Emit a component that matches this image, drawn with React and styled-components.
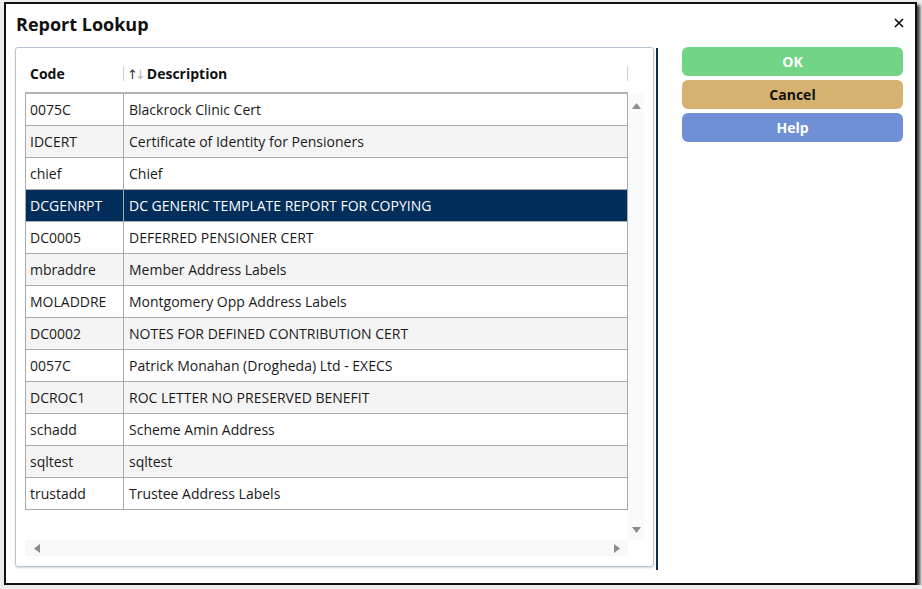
import styled, { createGlobalStyle } from "styled-components";

const GlobalStyle = createGlobalStyle`
  html, body {
    margin: 0;
    padding: 0;
    background: #ececec;
  }
  body {
    font-family: "Open Sans", "DejaVu Sans", sans-serif;
    color: #111;
  }
`;

const reports = [
  { code: "0075C", description: "Blackrock Clinic Cert" },
  { code: "IDCERT", description: "Certificate of Identity for Pensioners" },
  { code: "chief", description: "Chief" },
  { code: "DCGENRPT", description: "DC GENERIC TEMPLATE REPORT FOR COPYING" },
  { code: "DC0005", description: "DEFERRED PENSIONER CERT" },
  { code: "mbraddre", description: "Member Address Labels" },
  { code: "MOLADDRE", description: "Montgomery Opp Address Labels" },
  { code: "DC0002", description: "NOTES FOR DEFINED CONTRIBUTION CERT" },
  { code: "0057C", description: "Patrick Monahan (Drogheda) Ltd - EXECS" },
  { code: "DCROC1", description: "ROC LETTER NO PRESERVED BENEFIT" },
  { code: "schadd", description: "Scheme Amin Address" },
  { code: "sqltest", description: "sqltest" },
  { code: "trustadd", description: "Trustee Address Labels" },
];

const selectedCode = "DCGENRPT";

function Arrow({ dir }) {
  const points = {
    up: "0,7 4.5,1 9,7",
    down: "0,1 4.5,7 9,1",
    left: "7,0 1,4.5 7,9",
    right: "1,0 7,4.5 1,9",
  };
  return (
    <svg width="9" height="9" viewBox="0 0 9 9">
      <polygon points={points[dir]} fill="#8c8c8c" />
    </svg>
  );
}

export default function App() {
  return (
    <>
      <GlobalStyle />
      <Dialog>
        <TitleBar>
          <Title>Report Lookup</Title>
          <CloseButton aria-label="close">
            <svg width="10" height="10" viewBox="0 0 10 10">
              <path d="M1 1 L9 9 M9 1 L1 9" stroke="#111" strokeWidth="1.7" />
            </svg>
          </CloseButton>
        </TitleBar>
        <Body>
          <GridPanel>
            <HeaderRow>
              <HeaderCell>Code</HeaderCell>
              <HeaderCell>
                <SortIcon>
                  <span>↑</span>
                  <span className="off">↓</span>
                </SortIcon>
                Description
              </HeaderCell>
            </HeaderRow>
            <ScrollBody>
              <Table>
                {reports.map((r, i) => (
                  <Row
                    key={r.code}
                    $alt={i % 2 === 1}
                    $selected={r.code === selectedCode}
                  >
                    <Cell>{r.code}</Cell>
                    <Cell>{r.description}</Cell>
                  </Row>
                ))}
              </Table>
              <VScroll>
                <Arrow dir="up" />
                <Arrow dir="down" />
              </VScroll>
            </ScrollBody>
            <HScroll>
              <Arrow dir="left" />
              <Arrow dir="right" />
            </HScroll>
          </GridPanel>
          <Divider />
          <Buttons>
            <Button $bg="#72d585" $color="#fff">OK</Button>
            <Button $bg="#d5b26f" $color="#111">Cancel</Button>
            <Button $bg="#6f8fd6" $color="#fff">Help</Button>
          </Buttons>
        </Body>
      </Dialog>
    </>
  );
}

const Dialog = styled.div`
  box-sizing: border-box;
  margin: 2px 0 0 4px;
  width: 913px;
  height: 583px;
  background: #fff;
  border: 2px solid #111;
  box-shadow: 3px 3px 3px rgba(0, 0, 0, 0.75);
  display: flex;
  flex-direction: column;
`;

const TitleBar = styled.div`
  height: 43px;
  display: flex;
  align-items: flex-start;
  justify-content: space-between;
  padding: 7px 11px 0 10px;
  box-sizing: border-box;
`;

const Title = styled.h1`
  margin: 0;
  font-size: 18px;
  line-height: 26px;
  font-weight: 700;
  color: #111;
`;

const CloseButton = styled.div`
  margin-top: 7px;
  display: flex;
`;

const Body = styled.div`
  display: flex;
  padding: 0 11px 0 9px;
`;

const GridPanel = styled.div`
  box-sizing: border-box;
  width: 639px;
  height: 520px;
  border: 1px solid #b8c4d1;
  border-radius: 3px;
  box-shadow: 0 1px 2px rgba(120, 140, 160, 0.35);
  padding: 12px 0 0 9px;
  display: flex;
  flex-direction: column;
`;

const HeaderRow = styled.div`
  display: grid;
  grid-template-columns: 99px 504px;
  height: 34px;
  border-bottom: 2px solid #b3b3b3;
  box-sizing: border-box;
  width: 603px;
`;

const HeaderCell = styled.div`
  display: flex;
  align-items: center;
  padding: 0 0 5px 5px;
  font-size: 14px;
  font-weight: 700;
  position: relative;
  &:nth-child(2) {
    padding-left: 3px;
  }
  &::after {
    content: "";
    position: absolute;
    right: 0;
    top: 6px;
    height: 15px;
    border-right: 1px solid #cfcfcf;
  }
`;

const SortIcon = styled.span`
  display: inline-flex;
  font-size: 13px;
  font-weight: 400;
  margin-right: 4px;
  color: #333;
  letter-spacing: -3px;
  .off {
    color: #b5b5b5;
  }
`;

const ScrollBody = styled.div`
  display: flex;
  height: 446px;
`;

const Table = styled.div`
  width: 603px;
  align-self: flex-start;
  box-sizing: border-box;
  border-left: 1px solid #a9a9a9;
  border-right: 1px solid #a9a9a9;
`;

const Row = styled.div`
  display: grid;
  grid-template-columns: 98px 1fr;
  height: 32px;
  box-sizing: border-box;
  border-bottom: 1px solid #a9a9a9;
  background: ${(p) => (p.$selected ? "#022e5c" : p.$alt ? "#f4f4f4" : "#fff")};
  color: ${(p) => (p.$selected ? "#fff" : "#1a1a1a")};
`;

const Cell = styled.div`
  display: flex;
  align-items: center;
  padding-left: 5px;
  font-size: 14px;
  white-space: nowrap;
  overflow: hidden;
  &:first-child {
    padding-left: 4px;
    border-right: 1px solid #a9a9a9;
  }
`;

const VScroll = styled.div`
  width: 16px;
  background: #fafafa;
  display: flex;
  flex-direction: column;
  justify-content: space-between;
  align-items: center;
  padding: 8px 0 5px;
  box-sizing: border-box;
`;

const HScroll = styled.div`
  width: 603px;
  height: 16px;
  background: #f8f8f8;
  display: flex;
  justify-content: space-between;
  align-items: center;
  padding: 0 6px 0 8px;
  box-sizing: border-box;
`;

const Divider = styled.div`
  width: 2px;
  margin: 1px 0 0 2px;
  height: 522px;
  background: #0f2d4d;
`;

const Buttons = styled.div`
  margin-left: 24px;
  width: 221px;
  display: flex;
  flex-direction: column;
  gap: 4px;
`;

const Button = styled.div`
  height: 29px;
  border-radius: 6px;
  background: ${(p) => p.$bg};
  color: ${(p) => p.$color};
  font-size: 14px;
  font-weight: 700;
  display: flex;
  align-items: center;
  justify-content: center;
  padding-bottom: 1px;
  box-sizing: border-box;
`;
